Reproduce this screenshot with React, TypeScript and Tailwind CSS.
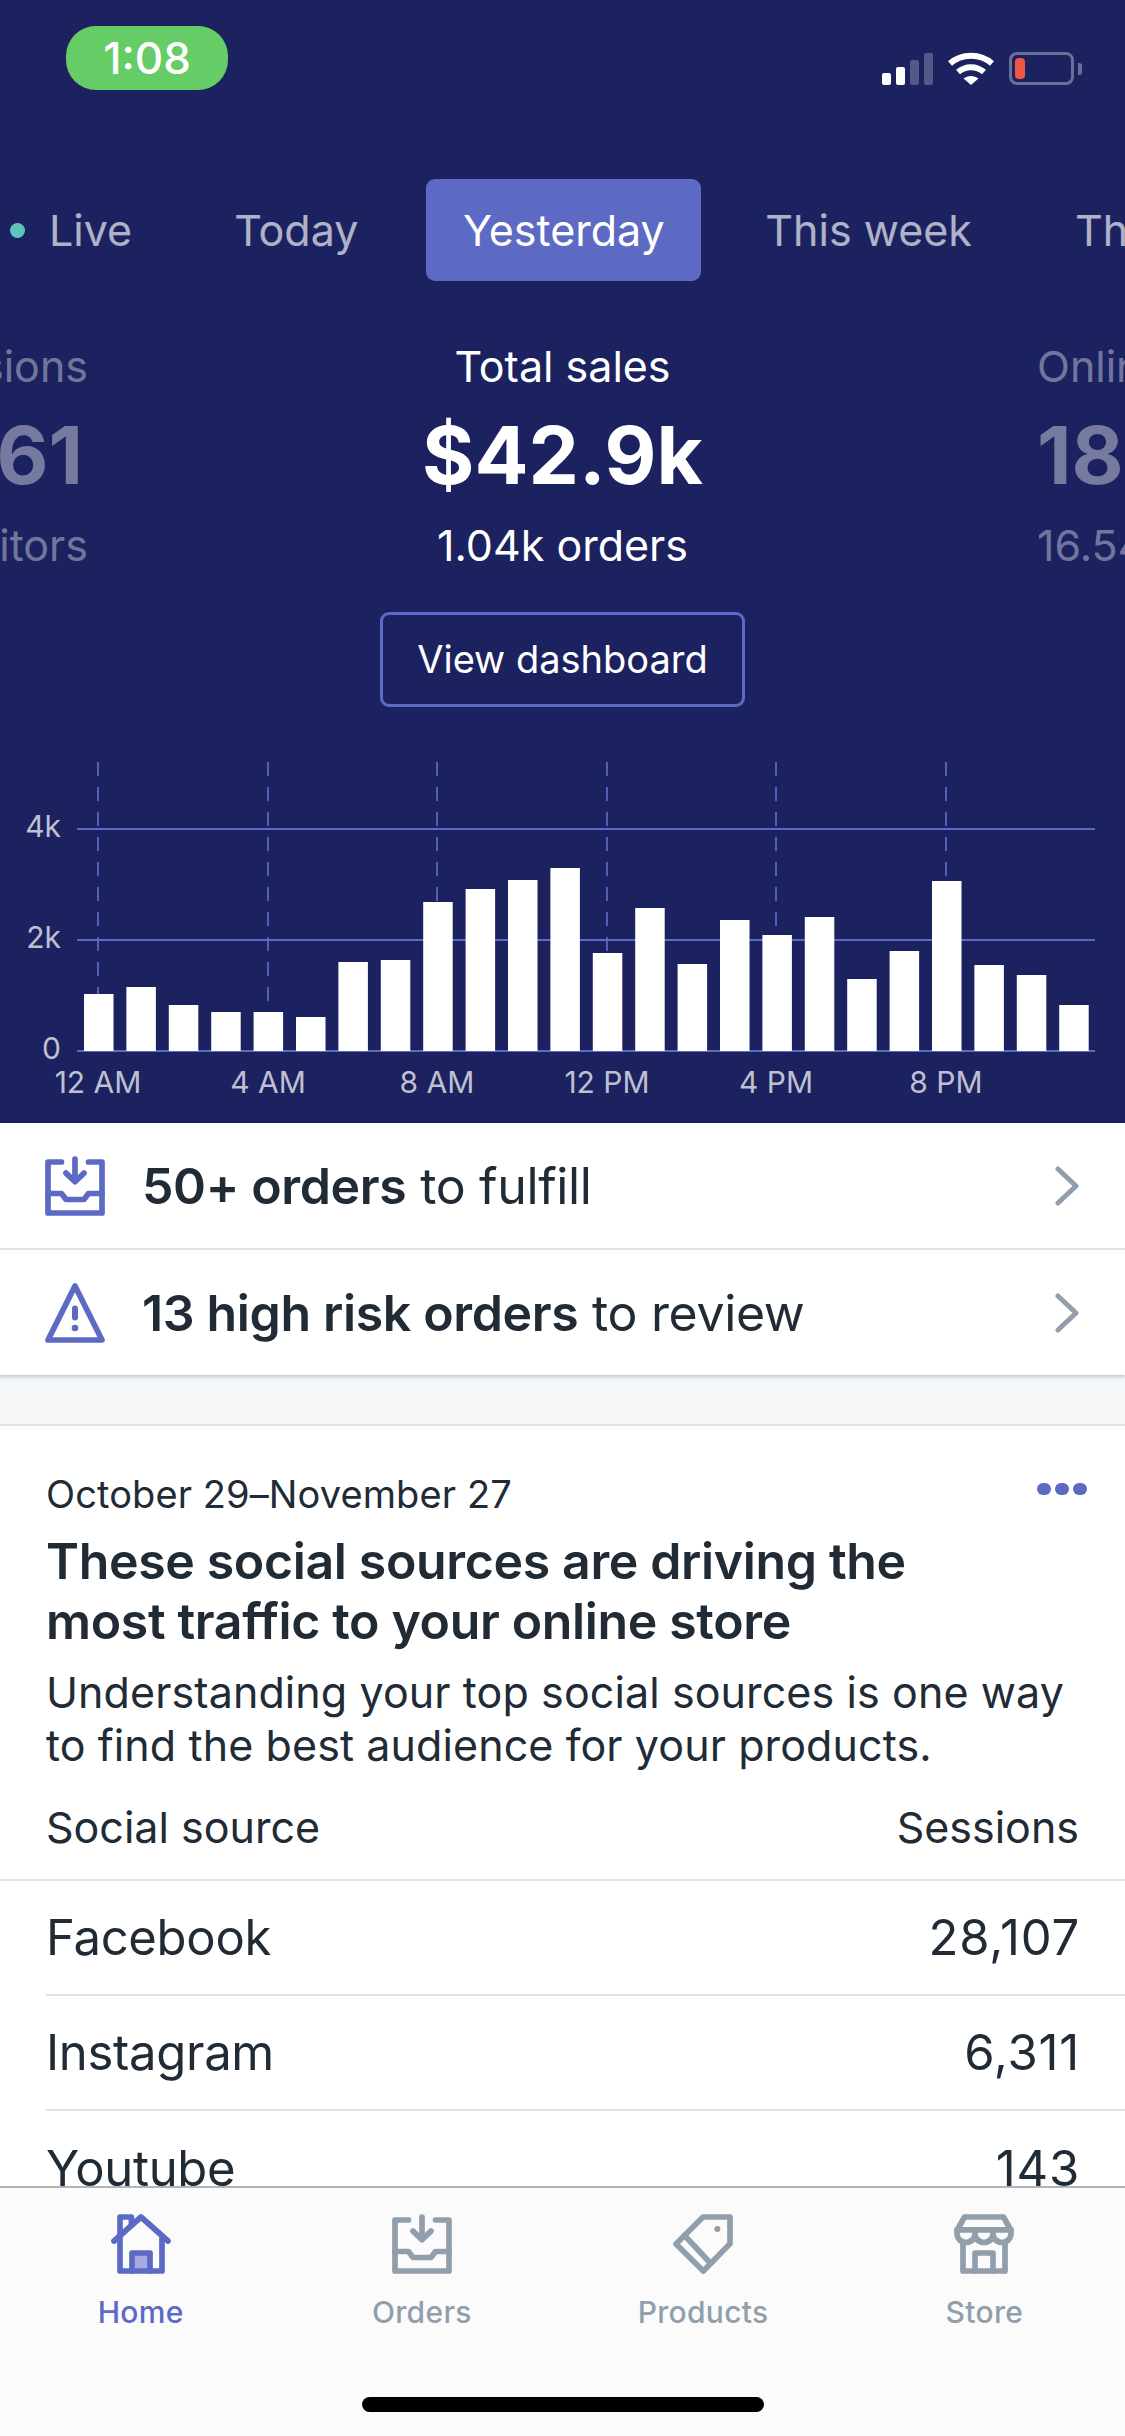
const bars = [170, 191, 137, 116, 118, 102, 266, 274, 448, 486, 514, 550, 295, 428, 262, 392, 347, 401, 215, 299, 509, 258, 229, 137].map((h) => Math.round(h / 3));
const hours = [
  { x: 98, label: '12 AM' },
  { x: 268, label: '4 AM' },
  { x: 437, label: '8 AM' },
  { x: 607, label: '12 PM' },
  { x: 776, label: '4 PM' },
  { x: 946, label: '8 PM' },
];

function Chart() {
  // svg coords start at y=707 of the page
  const base = 344;
  return (
    <svg width="1125" height="416" viewBox="0 0 1125 416" className="block">
      {hours.map((h) => (
        <line key={h.x} x1={h.x} x2={h.x} y1={55} y2={base} stroke="#5c6ac4" strokeWidth="2" strokeOpacity="0.85" strokeDasharray="14 11" />
      ))}
      {[122, 233, 344].map((y) => (
        <line key={y} x1={77} x2={1095} y1={y} y2={y} stroke="#5c6ac4" strokeWidth="2" />
      ))}
      {bars.map((h, i) => (
        <rect key={i} x={84 + i * 42.4} y={base - h} width={29.5} height={h} fill="#fff" />
      ))}
      <g fill="#fff" fillOpacity="0.72" fontFamily="Inter, sans-serif" fontSize="30">
        <text x="61" y="130" textAnchor="end">4k</text>
        <text x="61" y="241" textAnchor="end">2k</text>
        <text x="61" y="352" textAnchor="end">0</text>
        {hours.map((h) => (
          <text key={h.label} x={h.x} y={386} textAnchor="middle">{h.label}</text>
        ))}
      </g>
    </svg>
  );
}

function InboxIcon({ className }: { className: string }) {
  return (
    <svg viewBox="0 0 20 20" fill="none" stroke="currentColor" strokeWidth="1.9" strokeLinecap="round" strokeLinejoin="round" className={className}>
      <path d="M5.500 2H1v17h18V2h-4.500" />
      <path d="M10 1v7.500M7 5.700l3 2.900 3-2.900" />
      <path d="M1 12.500h4.500l1.500 2h6l1.500-2H19" />
    </svg>
  );
}

function WarningIcon({ className }: { className: string }) {
  return (
    <svg viewBox="0 0 20 20" fill="none" stroke="currentColor" strokeWidth="1.9" strokeLinecap="round" strokeLinejoin="round" className={className}>
      <path d="M10 1l9 18H1z" />
      <path d="M10 8.500v3" strokeWidth="2" />
      <circle cx="10" cy="15" r="1.100" fill="currentColor" stroke="none" />
    </svg>
  );
}

function HomeIcon({ className }: { className: string }) {
  return (
    <svg viewBox="0 0 20 20" fill="none" stroke="currentColor" strokeWidth="1.9" strokeLinejoin="round" strokeLinecap="round" className={className}>
      <path d="M7 19v-6h6v6" fill="#a6ace0" />
      <path d="M3 8v11h14V8" />
      <path d="M1 9l9-8 9 8" />
      <path d="M3 6.500V1h3.800v2.500" />
    </svg>
  );
}

function TagIcon({ className }: { className: string }) {
  return (
    <svg viewBox="0 0 20 20" fill="none" stroke="currentColor" strokeWidth="1.9" strokeLinejoin="round" strokeLinecap="round" className={className}>
      <path d="M10 1h9v8.900L10.100 19 1 10z" />
      <path d="M3.800 7.100l8.700 9.300" />
      <circle cx="14.800" cy="5" r="1" fill="currentColor" stroke="none" />
    </svg>
  );
}

function StoreIcon({ className }: { className: string }) {
  return (
    <svg viewBox="0 0 20 20" fill="none" stroke="currentColor" strokeWidth="1.9" strokeLinejoin="round" strokeLinecap="round" className={className}>
      <path d="M3.500 1h13L19 5.500V6.500a3 3 0 0 1-6 0 3 3 0 0 1-6 0 3 3 0 0 1-6 0V5.500z" />
      <path d="M1 5.300h18" />
      <path d="M3 9.500V19h14V9.500" />
      <path d="M7 19v-6h6v6" />
    </svg>
  );
}

function StatusIcons() {
  return (
    <div className="flex items-end">
      <div className="flex items-end gap-[5px]">
        <div className="w-[9px] h-[12px] rounded-[2px] bg-white" />
        <div className="w-[9px] h-[18px] rounded-[2px] bg-white" />
        <div className="w-[9px] h-[25px] rounded-[2px] bg-white/25" />
        <div className="w-[9px] h-[32px] rounded-[2px] bg-white/25" />
      </div>
      <svg width="46" height="33" viewBox="0 0 46 33" className="ml-[15px]">
        <path d="M2 11.500C13.500 1 32.500 1 44 11.500" fill="none" stroke="#fff" strokeWidth="6" />
        <path d="M10 20c7.500-6.500 18.500-6.500 26 0" fill="none" stroke="#fff" strokeWidth="6" />
        <path d="M15.500 26.500c4.500-3.500 10.500-3.500 15 0L23 33z" fill="#fff" />
      </svg>
      <div className="ml-[15px] w-[65px] h-[33px] rounded-[8px] border-[3px] border-white/35 p-[3px]">
        <div className="w-[10px] h-full rounded-[4px] bg-[#ef5744]" />
      </div>
      <div className="ml-[4px] mb-[10px] w-[4px] h-[12px] rounded-r-[3px] bg-white/35" />
    </div>
  );
}

function ActionRow({ icon, bold, rest }: { icon: React.ReactNode; bold: string; rest: string }) {
  return (
    <div className="flex items-center h-[125px] pl-[45px] pr-[45px] bg-white">
      {icon}
      <div className="ml-[37px] pt-[2px] text-[50px] text-[#212b36] tracking-[-0.35px]">
        <span className="font-semibold">{bold}</span> {rest}
      </div>
      <svg width="26" height="40" viewBox="0 0 26 40" fill="none" stroke="#919eab" strokeWidth="5" strokeLinecap="round" strokeLinejoin="round" className="ml-auto">
        <path d="M4 3l18 17L4 37" />
      </svg>
    </div>
  );
}

function SourceRow({ name, value, border }: { name: string; value: string; border: boolean }) {
  return (
    <div className={`flex items-center justify-between h-[115px] ml-[46px] pr-[45px] text-[49px] text-[#212b36] ${border ? 'border-b-2 border-[#dfe3e8]' : ''}`}>
      <span className="tracking-[-0.3px]">{name}</span>
      <span className="tracking-[0.8px]">{value}</span>
    </div>
  );
}

function TabItem({ icon, label, active }: { icon: React.ReactNode; label: string; active?: boolean }) {
  return (
    <div className={`flex flex-col items-center ${active ? 'text-[#5c6ac4]' : 'text-[#919eab]'}`}>
      {icon}
      <span className="mt-[20px] text-[30px] leading-[36px] font-medium tracking-[0.3px]">{label}</span>
    </div>
  );
}

export default function App() {
  return (
    <div className="relative w-[1125px] h-[2436px] overflow-hidden bg-[#f4f6f8] font-['Inter',sans-serif]">
      <div className="h-[1123px] bg-[#1c2260] overflow-hidden text-white">
        <div className="h-[179px] flex justify-between pl-[66px] pr-[43px]">
          <div className="mt-[26px] w-[162px] h-[64px] rounded-[30px] bg-[#66cc66] flex items-center justify-center text-[44px] font-medium">1:08</div>
          <div className="mt-[52px] h-[33px]">
            <StatusIcons />
          </div>
        </div>

        <div className="flex items-center h-[102px] text-[43px] whitespace-nowrap">
          <div className="ml-[10px] w-[15px] h-[15px] rounded-full bg-[#5fc4bd] shrink-0" />
          <span className="ml-[24px] text-white/65 shrink-0">Live</span>
          <span className="ml-[102px] text-white/65 shrink-0">Today</span>
          <span className="ml-[68px] flex items-center justify-center w-[275px] h-[102px] rounded-[9px] bg-[#5c6ac4] shrink-0">Yesterday</span>
          <span className="ml-[64px] text-white/65 shrink-0">This week</span>
          <span className="ml-[103px] text-white/65 shrink-0">This month</span>
        </div>

        <div className="flex mt-[60px] whitespace-nowrap">
          <div className="shrink-0 w-[400px] -ml-[312px] text-right text-white/40">
            <div className="text-[43px] leading-[50px]">Sessions</div>
            <div className="mt-[19px] mr-[5px] text-[80px] leading-[90px] font-bold">61</div>
            <div className="mt-[20px] text-[43px] leading-[50px]">visitors</div>
          </div>
          <div className="shrink-0 w-[949px] text-center">
            <div className="text-[43px] leading-[50px]">Total sales</div>
            <div className="mt-[19px] text-[80px] leading-[90px] font-bold">$42.9k</div>
            <div className="mt-[20px] text-[43px] leading-[50px]">1.04k orders</div>
            <div className="mt-[42px] mx-auto w-[365px] h-[95px] rounded-[9px] border-[3px] border-[#5c6ac4] flex items-center justify-center text-[38px]">View dashboard</div>
          </div>
          <div className="shrink-0 w-[400px] text-white/40">
            <div className="text-[43px] leading-[50px]">Online store</div>
            <div className="mt-[19px] text-[80px] leading-[90px] font-bold">18</div>
            <div className="mt-[20px] text-[43px] leading-[50px]">16.54k</div>
          </div>
        </div>

        <Chart />
      </div>

      <div className="shadow-[0_2px_3px_rgba(99,115,129,0.35)]">
        <ActionRow icon={<InboxIcon className="w-[60px] h-[60px] text-[#5c6ac4] shrink-0" />} bold="50+ orders" rest="to fulfill" />
        <div className="h-[2px] bg-[#dfe3e8]" />
        <ActionRow icon={<WarningIcon className="w-[60px] h-[60px] text-[#5c6ac4] shrink-0" />} bold="13 high risk orders" rest="to review" />
      </div>

      <div className="mt-[49px] bg-white border-t-2 border-[#dfe3e8]">
        <div className="relative px-[46px] pt-[45px]">
          <div className="text-[38px] leading-[46px] text-[#212b36] tracking-[0.1px]">October 29–November 27</div>
          <div className="absolute right-[38px] top-[57px] flex gap-[4px]">
            <div className="w-[14px] h-[12px] rounded-full bg-[#5c6ac4]" />
            <div className="w-[14px] h-[12px] rounded-full bg-[#5c6ac4]" />
            <div className="w-[14px] h-[12px] rounded-full bg-[#5c6ac4]" />
          </div>
          <div className="mt-[14px] text-[50px] leading-[60px] font-semibold text-[#212b36] tracking-[-0.35px]">
            These social sources are driving the<br />most traffic to your online store
          </div>
          <div className="mt-[15px] text-[43px] leading-[53px] text-[#212b36] tracking-[0.1px]">
            Understanding your top social sources is one way<br />to find the best audience for your products.
          </div>
        </div>
        <div className="flex items-center justify-between h-[62px] mt-[24px] px-[46px] text-[43px] text-[#212b36]">
          <span>Social source</span>
          <span>Sessions</span>
        </div>
        <div className="border-t-2 border-[#dfe3e8] mt-[21px]">
          <SourceRow name="Facebook" value="28,107" border />
          <SourceRow name="Instagram" value="6,311" border />
          <SourceRow name="Youtube" value="143" border={false} />
        </div>
      </div>

      <div className="absolute left-0 right-0 bottom-0 h-[250px] bg-[#fbfbfb] border-t-2 border-[#b3b3b3]">
        <div className="grid grid-cols-4 pt-[26px]">
          <TabItem active label="Home" icon={<HomeIcon className="w-[60px] h-[60px]" />} />
          <TabItem label="Orders" icon={<InboxIcon className="w-[60px] h-[60px]" />} />
          <TabItem label="Products" icon={<TagIcon className="w-[60px] h-[60px]" />} />
          <TabItem label="Store" icon={<StoreIcon className="w-[60px] h-[60px]" />} />
        </div>
        <div className="absolute left-[362px] bottom-[24px] w-[402px] h-[15px] rounded-full bg-black" />
      </div>
    </div>
  );
}
